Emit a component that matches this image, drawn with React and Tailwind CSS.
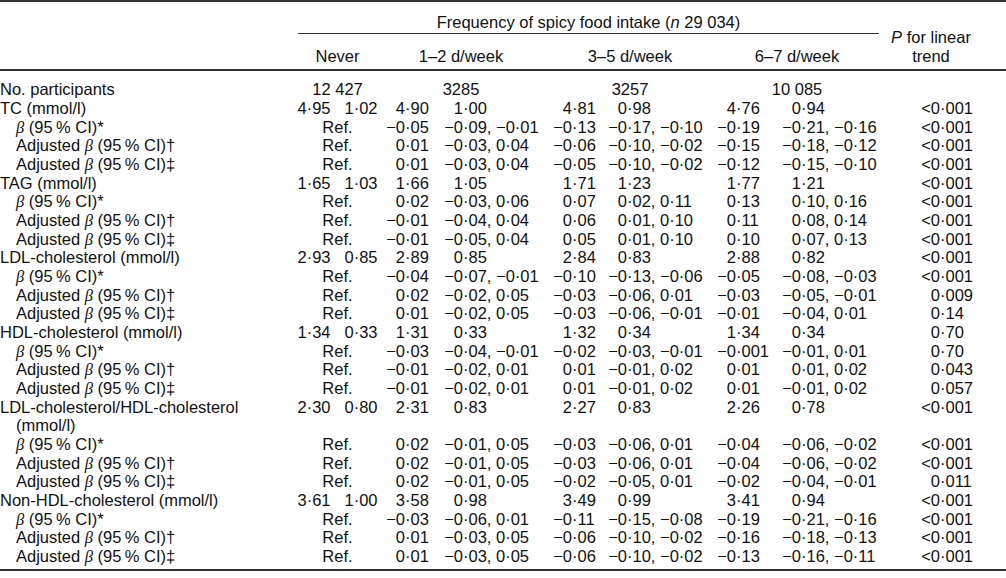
import React from 'react';

// convert "-0.05" style strings to typeset form
const n = (s) => s.replace(/-/g, '\u2212').replace(/\./g, '\u00b7');

const Beta = () => <span className="font-['Liberation_Serif',serif] italic">β</span>;

const Ci = () => <>(95{'\u2009'}% CI)</>;

const rows = [
  { label: 'TC (mmol/l)', never: ['4.95', '1.02'], g: [['4.90', '1.00'], ['4.81', '0.98'], ['4.76', '0.94']], p: '<0.001' },
  { kind: 'b', g: [['-0.05', '-0.09, -0.01'], ['-0.13', '-0.17, -0.10'], ['-0.19', '-0.21, -0.16']], p: '<0.001' },
  { kind: 'a1', g: [['0.01', '-0.03, 0.04'], ['-0.06', '-0.10, -0.02'], ['-0.15', '-0.18, -0.12']], p: '<0.001' },
  { kind: 'a2', g: [['0.01', '-0.03, 0.04'], ['-0.05', '-0.10, -0.02'], ['-0.12', '-0.15, -0.10']], p: '<0.001' },
  { label: 'TAG (mmol/l)', never: ['1.65', '1.03'], g: [['1.66', '1.05'], ['1.71', '1.23'], ['1.77', '1.21']], p: '<0.001' },
  { kind: 'b', g: [['0.02', '-0.03, 0.06'], ['0.07', '0.02, 0.11'], ['0.13', '0.10, 0.16']], p: '<0.001' },
  { kind: 'a1', g: [['-0.01', '-0.04, 0.04'], ['0.06', '0.01, 0.10'], ['0.11', '0.08, 0.14']], p: '<0.001' },
  { kind: 'a2', g: [['-0.01', '-0.05, 0.04'], ['0.05', '0.01, 0.10'], ['0.10', '0.07, 0.13']], p: '<0.001' },
  { label: 'LDL-cholesterol (mmol/l)', never: ['2.93', '0.85'], g: [['2.89', '0.85'], ['2.84', '0.83'], ['2.88', '0.82']], p: '<0.001' },
  { kind: 'b', g: [['-0.04', '-0.07, -0.01'], ['-0.10', '-0.13, -0.06'], ['-0.05', '-0.08, -0.03']], p: '<0.001' },
  { kind: 'a1', g: [['0.02', '-0.02, 0.05'], ['-0.03', '-0.06, 0.01'], ['-0.03', '-0.05, -0.01']], p: '0.009' },
  { kind: 'a2', g: [['0.01', '-0.02, 0.05'], ['-0.03', '-0.06, -0.01'], ['-0.01', '-0.04, 0.01']], p: '0.14' },
  { label: 'HDL-cholesterol (mmol/l)', never: ['1.34', '0.33'], g: [['1.31', '0.33'], ['1.32', '0.34'], ['1.34', '0.34']], p: '0.70' },
  { kind: 'b', g: [['-0.03', '-0.04, -0.01'], ['-0.02', '-0.03, -0.01'], ['-0.001', '-0.01, 0.01']], p: '0.70' },
  { kind: 'a1', g: [['-0.01', '-0.02, 0.01'], ['0.01', '-0.01, 0.02'], ['0.01', '0.01, 0.02']], p: '0.043' },
  { kind: 'a2', g: [['-0.01', '-0.02, 0.01'], ['0.01', '-0.01, 0.02'], ['0.01', '-0.01, 0.02']], p: '0.057' },
  { label: 'LDL-cholesterol/HDL-cholesterol', never: ['2.30', '0.80'], g: [['2.31', '0.83'], ['2.27', '0.83'], ['2.26', '0.78']], p: '<0.001' },
  { label: '(mmol/l)', indent: true },
  { kind: 'b', g: [['0.02', '-0.01, 0.05'], ['-0.03', '-0.06, 0.01'], ['-0.04', '-0.06, -0.02']], p: '<0.001' },
  { kind: 'a1', g: [['0.02', '-0.01, 0.05'], ['-0.03', '-0.06, 0.01'], ['-0.04', '-0.06, -0.02']], p: '<0.001' },
  { kind: 'a2', g: [['0.02', '-0.01, 0.05'], ['-0.02', '-0.05, 0.01'], ['-0.02', '-0.04, -0.01']], p: '0.011' },
  { label: 'Non-HDL-cholesterol (mmol/l)', never: ['3.61', '1.00'], g: [['3.58', '0.98'], ['3.49', '0.99'], ['3.41', '0.94']], p: '<0.001' },
  { kind: 'b', g: [['-0.03', '-0.06, 0.01'], ['-0.11', '-0.15, -0.08'], ['-0.19', '-0.21, -0.16']], p: '<0.001' },
  { kind: 'a1', g: [['0.01', '-0.03, 0.05'], ['-0.06', '-0.10, -0.02'], ['-0.16', '-0.18, -0.13']], p: '<0.001' },
  { kind: 'a2', g: [['0.01', '-0.03, 0.05'], ['-0.06', '-0.10, -0.02'], ['-0.13', '-0.16, -0.11']], p: '<0.001' },
];

const grid =
  'grid grid-cols-[298px_79px_28px_23px_35px_82px_27px_23px_32px_88px_21px_23px_42px_78px_61px_66px]';

// split a number at its decimal point so columns line up on it
const Dec = ({ v }) => {
  const s = n(v);
  const i = s.indexOf('\u00b7');
  return (
    <>
      <div className="flex justify-end whitespace-nowrap">{s.slice(0, i)}</div>
      <div className="flex justify-start whitespace-nowrap">{s.slice(i)}</div>
    </>
  );
};

const Label = ({ r }) => {
  if (r.kind === 'b')
    return (
      <div className="pl-[16px] whitespace-nowrap">
        <Beta /> <Ci />*
      </div>
    );
  if (r.kind === 'a1' || r.kind === 'a2')
    return (
      <div className="pl-[16px] whitespace-nowrap">
        Adjusted <Beta /> <Ci />
        {r.kind === 'a1' ? '†' : '‡'}
      </div>
    );
  return <div className={`whitespace-nowrap ${r.indent ? 'pl-[16px]' : ''}`}>{r.label}</div>;
};

const Row = ({ r }) => {
  if (!r.g) {
    return (
      <div className={`${grid} h-[18.68px]`}>
        <Label r={r} />
      </div>
    );
  }
  return (
    <div className={`${grid} h-[18.68px]`}>
      <Label r={r} />
      <div className="flex justify-center gap-[14px] whitespace-nowrap">
        {r.never ? (
          <>
            <span>{n(r.never[0])}</span>
            <span>{n(r.never[1])}</span>
          </>
        ) : (
          <span>Ref.</span>
        )}
      </div>
      {r.g.map(([a, b], k) => (
        <React.Fragment key={k}>
          <Dec v={a} />
          <Dec v={b} />
        </React.Fragment>
      ))}
      <Dec v={r.p} />
    </div>
  );
};

export default function App() {
  return (
    <div className="w-[1006px] h-[578px] bg-white text-[#111] font-['Liberation_Sans',Arial,sans-serif] text-[16.5px] leading-[18.68px] overflow-hidden">
      <div className="border-t-2 border-[#333]">
        <div className={`${grid} grid-rows-[32px_35px]`}>
          <div />
          <div className="col-span-13 flex items-end justify-center pb-[1px] border-b border-[#333]">
            <span>
              Frequency of spicy food intake (<i>n</i> 29 034)
            </span>
          </div>
          <div className="col-span-2 row-span-2 flex flex-col items-center justify-end pb-[3.6px] pr-[23px]">
            <span>
              <i>P</i> for linear
            </span>
            <span>trend</span>
          </div>
          <div />
          <div className="flex items-end justify-center pb-[3.6px]">Never</div>
          <div className="col-span-4 flex items-end justify-center pb-[3.6px]">1–2 d/week</div>
          <div className="col-span-4 flex items-end justify-center pb-[3.6px]">3–5 d/week</div>
          <div className="col-span-4 flex items-end justify-center pb-[3.6px]">6–7 d/week</div>
        </div>
      </div>
      <div className="border-t-2 border-b-2 border-[#333] pt-[9.3px] pb-[3px]">
        <div className={`${grid} h-[18.68px]`}>
          <div>No. participants</div>
          <div className="flex justify-center whitespace-nowrap">12 427</div>
          <div className="col-span-4 flex justify-center">3285</div>
          <div className="col-span-4 flex justify-center">3257</div>
          <div className="col-span-4 flex justify-center">10 085</div>
        </div>
        {rows.map((r, i) => (
          <Row key={i} r={r} />
        ))}
      </div>
    </div>
  );
}
